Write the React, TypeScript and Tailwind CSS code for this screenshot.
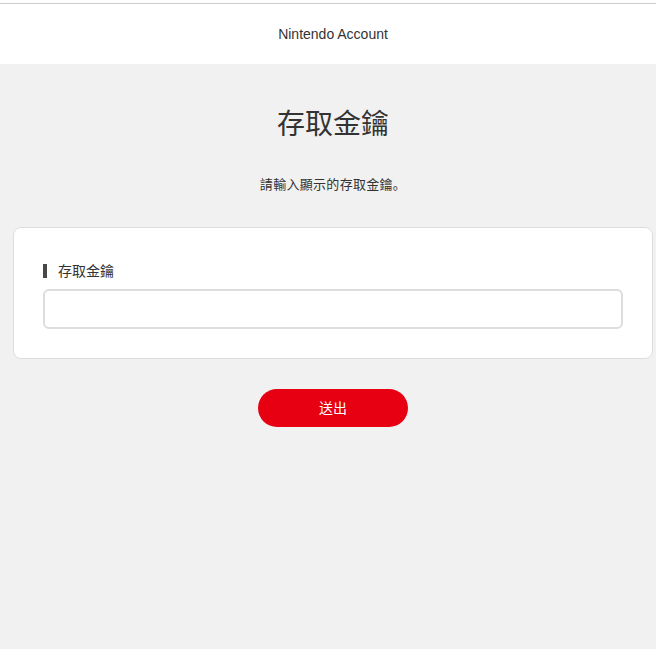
import React, { useState } from 'react';

const FONT = "'Liberation Sans', 'Noto Sans CJK SC', sans-serif";

export default function App() {
  const [key, setKey] = useState('');

  return (
    <div className="min-h-[649px] w-full overflow-hidden bg-[#f1f1f1]" style={{ fontFamily: FONT }}>
      <div className="w-[666px]">
        {/* Header */}
        <header className="bg-white">
          <div className="h-[3px]" />
          <div className="flex h-[61px] items-center justify-center border-t border-[#cccccc] text-[14px] text-[#333333]">
            Nintendo Account
          </div>
        </header>

        {/* Content */}
        <main className="flex flex-col items-center pt-[41px]">
          <h1 className="text-[28px] leading-[40px] text-[#333333]">存取金鑰</h1>
          <p className="mt-[30px] text-[13px] leading-[20px] tracking-[0.3px] text-[#333333]">請輸入顯示的存取金鑰。</p>

          <div className="mt-[32px] w-[640px] rounded-[8px] border border-[#dddddd] bg-white px-[29px] pt-[33px] pb-[29px]">
            <label htmlFor="access-key" className="flex items-center gap-[11px] text-[14px] leading-[20px] text-[#333333]">
              <span className="h-[14px] w-[4px] bg-[#484848]" />
              存取金鑰
            </label>
            <input
              id="access-key"
              type="text"
              value={key}
              onChange={(e) => setKey(e.target.value)}
              className="mt-[8px] block h-[40px] w-full rounded-[6px] border-2 border-[#dddddd] bg-white px-3 text-[14px] text-[#333333] focus:outline-none"
            />
          </div>

          <button
            type="button"
            className="mt-[30px] h-[38px] w-[150px] rounded-full bg-[#e60012] text-[14px] text-white"
          >
            送出
          </button>
        </main>
      </div>
    </div>
  );
}
